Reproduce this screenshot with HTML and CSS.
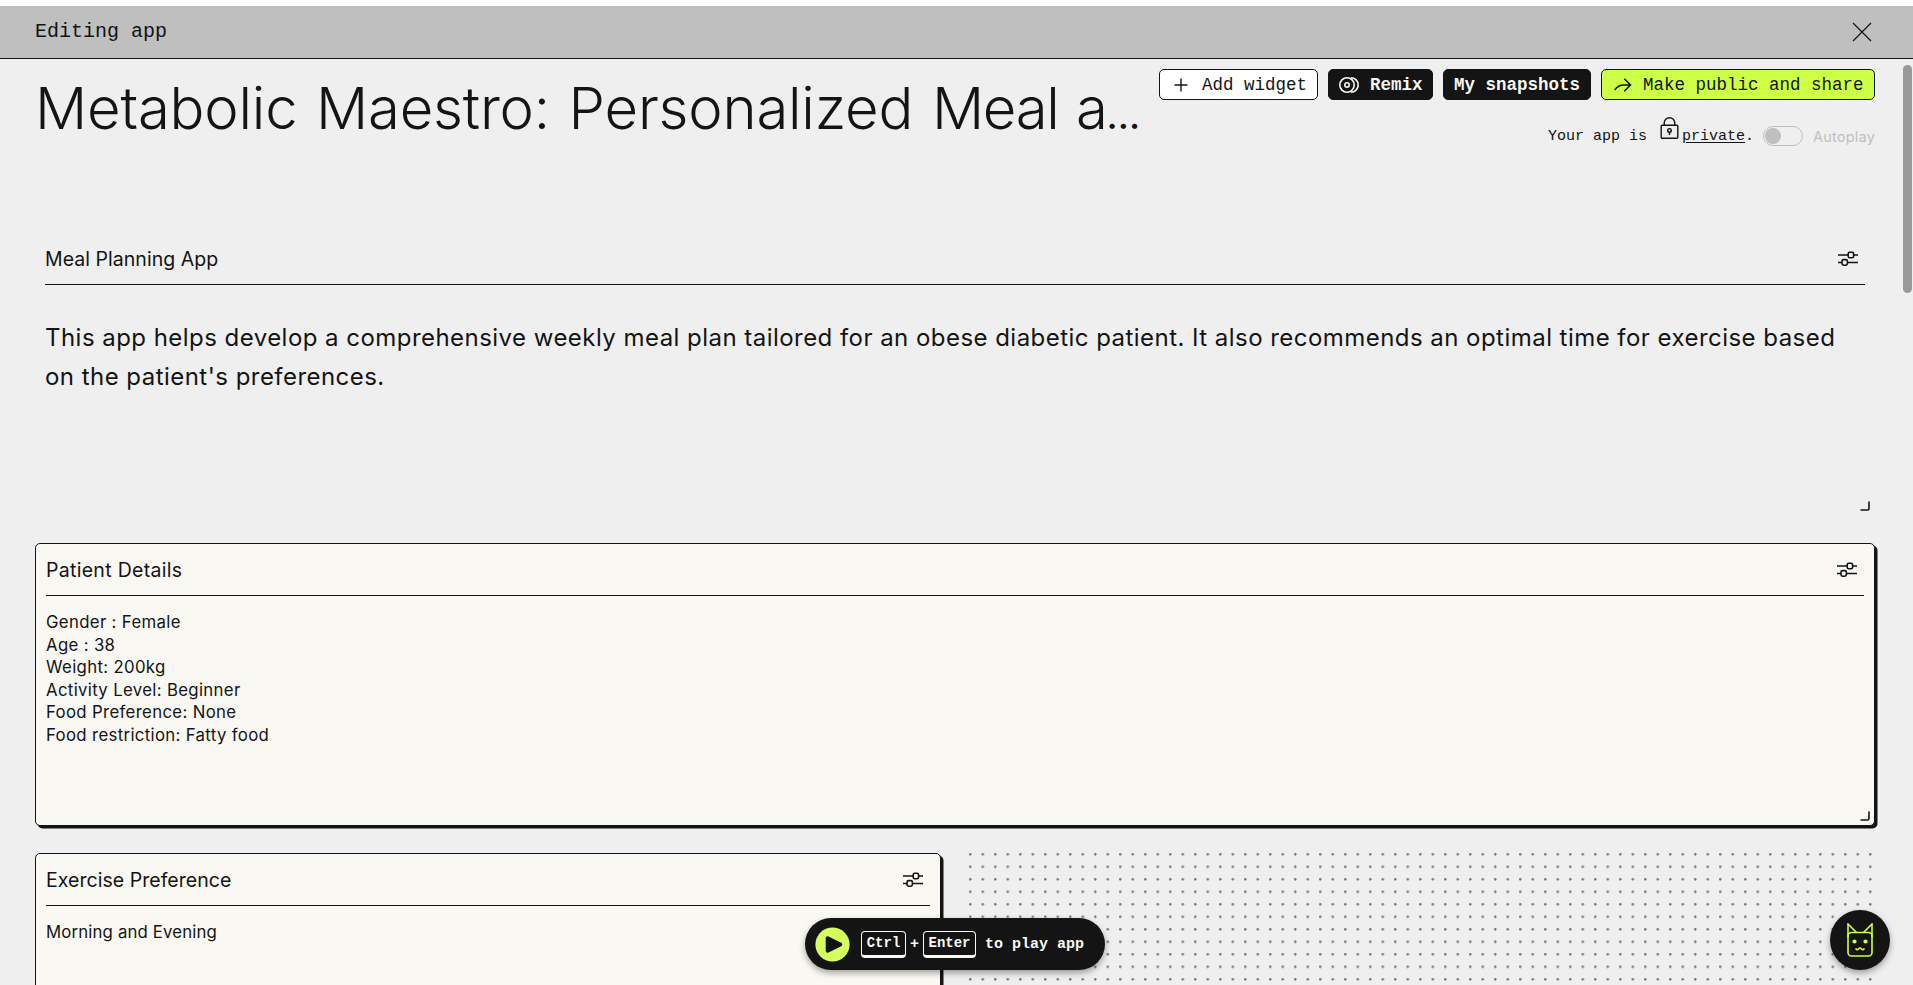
FILE: index.html
```html
<!DOCTYPE html>
<html lang="en">
<head>
<meta charset="utf-8">
<title>Metabolic Maestro</title>
<link rel="stylesheet" href="styles.css">
</head>
<body>
<svg class="defs" width="0" height="0">
  <symbol id="sliders" viewBox="0 0 20 15">
    <path d="M0 4H10M16 4H20M0 11.5H4M10 11.5H20" stroke-width="1.5"/>
    <rect x="10.2" y="1.2" width="5.4" height="5.6" rx="1.6"/>
    <rect x="4" y="8.6" width="5.4" height="5.6" rx="1.6"/>
  </symbol>
  <symbol id="corner" viewBox="0 0 10 10">
    <path d="M9 .5V7.5Q9 9 7.5 9H.5"/>
  </symbol>
</svg>
<header class="topbar">
  <span class="topbar-title">Editing app</span>
  <svg class="close" viewBox="0 0 20 20"><path d="M1 1L19 19M19 1L1 19"/></svg>
</header>
<main class="page">
  <section class="head">
    <h1 class="title">Metabolic Maestro: Personalized <span class="tight">Meal a</span><span class="dots-end">…</span></h1>
    <div class="side">
      <div class="buttons">
        <button class="btn add"><svg class="plus" viewBox="0 0 14 14"><path d="M7 .5V13.5M.5 7H13.5"/></svg>Add widget</button>
        <button class="btn dark remix"><svg class="rings" viewBox="0 0 20 16"><circle cx="8" cy="8" r="7.2"/><circle cx="8" cy="8" r="2.2"/><path d="M12 .8A7.2 7.2 0 0 1 12 15.2"/></svg>Remix</button>
        <button class="btn dark snaps">My snapshots</button>
        <button class="btn share"><svg class="arrow" viewBox="0 0 18 14"><path d="M.7 12C3 8.700 6 7 10 7H16.500M10.300 .700L16.500 7L10.300 13.300"/></svg>Make public and share</button>
      </div>
      <div class="status">
        <span class="mono">Your app is</span>
        <svg class="lock" viewBox="0 0 19 22"><rect x="1.2" y="8.2" width="16.6" height="13" rx="1"/><path d="M4.2 8V6A5.3 5.3 0 0 1 14.8 6V8M9.5 15V18"/><circle cx="9.5" cy="13.4" r="1.8"/></svg>
        <span class="mono"><a class="private">private</a>.</span>
        <span class="toggle"><i class="knob"></i></span>
        <span class="autoplay">Autoplay</span>
      </div>
    </div>
  </section>
  <section class="grid">
    <article class="widget wide">
      <header class="widget-head"><span>Meal Planning App</span><svg class="sliders"><use href="#sliders"/></svg></header>
      <p class="lead">This app helps develop a comprehensive weekly meal plan tailored for an obese diabetic patient. It also recommends an optimal time for exercise based<br>on the patient's preferences.</p>
      <svg class="corner open"><use href="#corner"/></svg>
    </article>
    <article class="widget card wide">
      <header class="widget-head"><span class="loose">Patient Details</span><svg class="sliders"><use href="#sliders"/></svg></header>
      <div class="content">Gender : Female<br>Age : 38<br>Weight: 200kg<br>Activity Level: Beginner<br>Food Preference: None<br>Food restriction: Fatty food</div>
      <svg class="corner"><use href="#corner"/></svg>
    </article>
    <article class="widget card">
      <header class="widget-head"><span>Exercise Preference</span><svg class="sliders"><use href="#sliders"/></svg></header>
      <div class="content snug">Morning and Evening</div>
    </article>
    <div class="dots"></div>
  </section>
</main>
<div class="scrollbar"></div>
<div class="play">
  <svg class="play-icon" viewBox="0 0 36 36"><circle cx="18" cy="18" r="17.6"/><path d="M13 11.5V24.5L26 18Z"/></svg>
  <kbd class="key ctrl">Ctrl</kbd><span class="plus-sign">+</span><kbd class="key enter">Enter</kbd>
  <span class="play-text">to play app</span>
</div>
<div class="bot">
  <svg class="cat" viewBox="0 0 26 34"><rect x="1" y="9.5" width="24" height="23.5" rx="3.5"/><path d="M1 14V1L9.5 9.5M25 14V1L16.500 9.500M8.500 25.500Q10 27.500 11.500 26Q13 24 14.500 26Q16 27.500 17.500 25.500"/><circle class="eye" cx="7.500" cy="18.500" r="2.100"/><circle class="eye" cx="18.500" cy="18.500" r="2.100"/></svg>
</div>
</body>
</html>
```
FILE: styles.css
```css
* { box-sizing: border-box; }
body { margin: 0; height: 985px; overflow: hidden; position: relative; background: #fff; color: #131413; font-family: Inter, "Noto Sans", sans-serif; }
svg { display: block; flex: none; fill: none; stroke: #131413; stroke-width: 1.6; }
.defs { position: absolute; }
.topbar { display: flex; align-items: center; justify-content: space-between; height: 53px; margin-top: 6px; padding: 0 41px 0 35px; background: #bfbfbf; border-bottom: 1px solid #131413; }
.topbar-title, .mono, .btn, .play { font-family: "Liberation Mono", monospace; }
.topbar-title { font-size: 20px; line-height: 22px; }
.close { width: 20px; height: 20px; stroke-width: 1.2; }
.page { height: 926px; padding: 10px 38px 0 35px; background: #efefef; overflow: hidden; }
.head { display: flex; justify-content: space-between; height: 164px; }
.title { margin: 0; font-size: 58px; line-height: 78px; font-weight: 300; letter-spacing: -0.2px; word-spacing: 2.5px; white-space: nowrap; }
.tight { letter-spacing: -1.3px; }
.dots-end { font-size: 37px; font-weight: 500; line-height: 1; letter-spacing: -2px; }
.side { display: flex; flex-direction: column; align-items: flex-end; gap: 26px; }
.buttons { display: flex; gap: 10px; }
.btn { display: flex; align-items: center; height: 31px; padding: 0; border: 1px solid #131413; border-radius: 5px; font-size: 17.5px; color: #131413; background: #fff; white-space: nowrap; }
.dark { background: #131413; color: #f9f8f3; font-weight: 700; }
.dark svg { stroke: #f9f8f3; }
.add { width: 159px; padding-left: 14px; }
.plus { width: 14px; height: 14px; margin-right: 14px; stroke-width: 1.4; }
.remix { width: 105px; padding-left: 10px; }
.rings { width: 20px; height: 16px; margin-right: 11px; }
.snaps { width: 148px; padding-left: 10px; }
.share { width: 274px; padding-left: 12px; background: #ccff45; }
.arrow { width: 18px; height: 14px; margin-right: 11px; }
.status { display: flex; align-items: center; height: 20px; font-size: 15px; white-space: nowrap; }
.lock { width: 19px; height: 22px; margin: -16px 3px 0 13px; stroke-width: 1.4; }
.private { text-decoration: underline; text-underline-offset: 2px; }
.toggle { width: 40px; height: 20px; margin: 0 10px 0 9px; padding: 1px; border: 1px solid #bfbfbf; border-radius: 10px; }
.knob { display: block; width: 16px; height: 16px; border-radius: 50%; background: #bfbfbf; }
.autoplay { color: #bfbfbf; font-size: 14.5px; letter-spacing: 0.2px; }
.grid { display: grid; grid-template-columns: 906px 906px; grid-auto-rows: 283px; gap: 27px 28px; }
.widget { position: relative; padding: 0 10px; }
.wide { grid-column: 1 / 3; }
.card { background: #f9f8f3; border: 1px solid #131413; border-radius: 5px; box-shadow: 2.5px 2.5px 0 #131413; }
.widget-head { display: flex; align-items: center; justify-content: space-between; height: 52px; padding-right: 7px; border-bottom: 1px solid #131413; font-size: 19.5px; letter-spacing: 0.04px; white-space: nowrap; }
.loose { letter-spacing: 0.3px; }
.sliders { width: 20px; height: 15px; }
.lead { margin: 33px 0 0; font-size: 24px; line-height: 39px; letter-spacing: 0.46px; white-space: nowrap; }
.content { margin-top: 15px; font-size: 16.8px; line-height: 22.5px; letter-spacing: 0.33px; white-space: nowrap; }
.snug { letter-spacing: 0.15px; }
.corner { position: absolute; right: 4px; bottom: 4px; width: 10px; height: 10px; }
.open { right: 5px; bottom: 5px; }
.dots { background: radial-gradient(circle at 1.3px 1.3px, #777 0.9px, transparent 1.6px) 0 0 / 12.5px 12.5px; }
.scrollbar { position: absolute; left: 1903px; top: 65px; width: 9px; height: 228px; border-radius: 5px; background: #999; }
.play { position: absolute; left: 805px; top: 918px; width: 300px; height: 52px; display: flex; align-items: center; padding-left: 10px; border-radius: 26px; background: #131413; color: #f9f8f3; font-size: 15px; font-weight: 700; box-shadow: 0 3px 6px rgba(0,0,0,.35); white-space: nowrap; }
.play-icon { width: 35px; height: 35px; margin-right: 11px; stroke: none; }
.play-icon circle { fill: #d4ff5c; }
.play-icon path { fill: #131413; stroke: #131413; stroke-width: 4; stroke-linejoin: round; }
.key { display: flex; align-items: center; justify-content: center; height: 27px; border: 1px solid #f9f8f3; border-bottom-width: 3px; border-radius: 4px; font: inherit; font-size: 14px; }
.ctrl { width: 45px; }
.enter { width: 53px; }
.plus-sign { width: 17px; text-align: center; }
.play-text { margin-left: 9px; }
.bot { position: absolute; left: 1830px; top: 910px; width: 60px; height: 60px; display: flex; align-items: center; justify-content: center; border-radius: 50%; background: #131413; box-shadow: 0 3px 6px rgba(0,0,0,.35); }
.cat { width: 26px; height: 34px; stroke: #ccff45; }
.cat .eye { fill: #ccff45; stroke: none; }
```
